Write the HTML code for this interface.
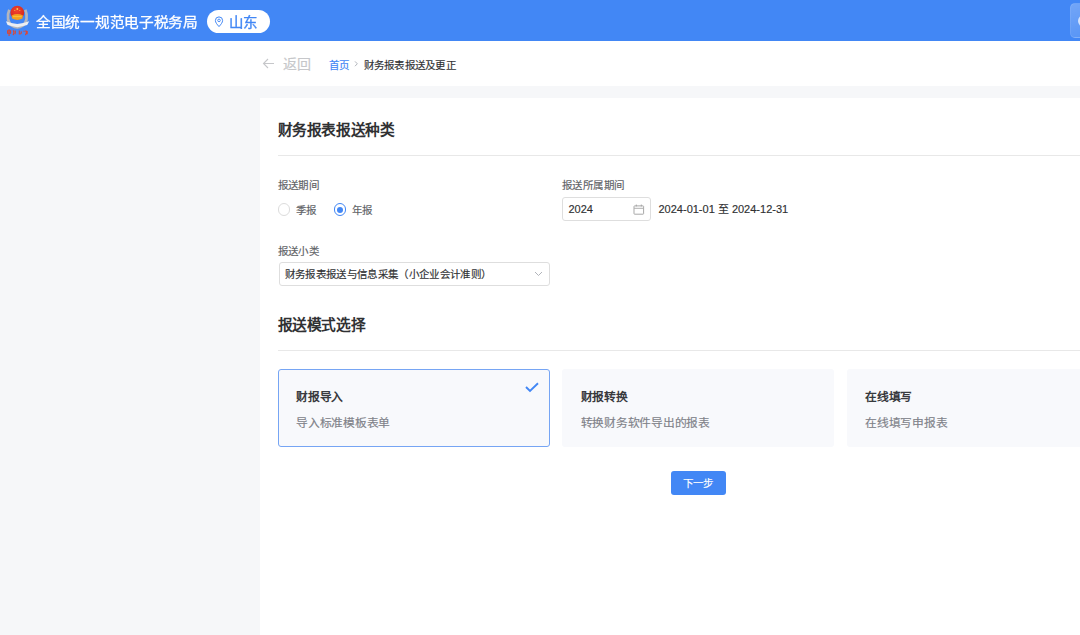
<!DOCTYPE html>
<html lang="zh-CN">
<head>
<meta charset="utf-8">
<style>
*{margin:0;padding:0;box-sizing:border-box}
html,body{width:1080px;height:635px;overflow:hidden;background:#f6f7f9;font-family:"Liberation Sans",sans-serif;-webkit-text-stroke-width:0.15px}
.a{position:absolute;white-space:nowrap}
#hdr{position:absolute;left:0;top:0;width:1080px;height:41.4px;background:#4287f5}
#sub{position:absolute;left:0;top:41px;width:1080px;height:45px;background:#fff}
#card{position:absolute;left:260px;top:97.5px;width:900px;height:600px;background:#fff}
.title{font-size:14.7px;letter-spacing:-0.35px;font-weight:bold;-webkit-text-stroke-width:0;color:#303133;line-height:20px}
.lbl{font-size:10.5px;letter-spacing:0.4px;color:#606266;line-height:14px}
.hr{position:absolute;left:278px;width:802px;height:1px;background:#e8e8e8}
.box{position:absolute;border:1px solid #dedede;border-radius:3px;background:#fff}
.opt{position:absolute;top:369px;width:272px;height:78.4px;background:#f8f9fc;border-radius:3px}
.opt.sel{border:1px solid #76a5f4}
.ot{position:absolute;font-size:11.76px;letter-spacing:-0.25px;-webkit-text-stroke-width:0;font-weight:bold;color:#383a3e;line-height:16px;white-space:nowrap}
.od{position:absolute;font-size:11.76px;letter-spacing:-0.25px;color:#808289;line-height:16px;white-space:nowrap}
</style>
</head>
<body>
<div id="hdr"></div>
<!-- logo -->
<svg class="a" style="left:0;top:0" width="34" height="40" viewBox="0 0 34 40">
  <defs><radialGradient id="rg" cx="0.45" cy="0.35" r="0.7"><stop offset="0" stop-color="#f0432f"/><stop offset="1" stop-color="#d3261a"/></radialGradient></defs>
  <path d="M9.3 9.8 C6.6 16 7.8 22.6 12 25.6 Q17.3 29 22.6 25.6 C26.8 22.6 28 16 25.3 9.8" fill="none" stroke="#b3b6bd" stroke-width="2.7"/>
  <circle cx="17.3" cy="12.7" r="6.9" fill="url(#rg)"/>
  <path d="M11.6 15.4 Q17.3 12.6 23 15.4 L22.4 18.6 Q17.3 21.2 12.2 18.6 Z" fill="#f3a020"/>
  <path d="M13 16.6 h8.6" stroke="#f9c53c" stroke-width="0.9"/>
  <circle cx="17.3" cy="9" r="0.9" fill="#f7d04a"/>
  <circle cx="14.8" cy="10.5" r="0.5" fill="#f7d04a"/>
  <circle cx="19.8" cy="10.5" r="0.5" fill="#f7d04a"/>
  <path d="M5.9 21.3 Q11 23.6 17.3 24 Q23.5 23.6 29.2 21.3 L27.2 25 Q22 26.3 17.3 27.2 Q12.5 26.3 7.6 25 Z" fill="#eceef2"/>
  <path d="M7.6 30.8 h3 v2.4 h-3z M9.1 29.3 v6.8 M13.2 30.2 q1.6 3.5 -0.4 4.8 M15 30.6 q1 2 0 3.6 M19.3 30.6 v3.8 M21 31.4 q1 1.6 -0.6 2.8 M23.4 31.2 h1.2 M25.6 30.3 q1.8 2.2 -0.2 4.8 M27.2 31 v3.2" fill="none" stroke="#e0452f" stroke-width="1.1"/>
</svg>
<div class="a" style="left:36px;top:12px;font-size:14.7px;letter-spacing:-0.3px;color:#fff;-webkit-text-stroke:0.3px #fff;line-height:20px;transform:scaleY(0.9);transform-origin:0 80%">全国统一规范电子税务局</div>
<div class="a" style="left:207px;top:10.4px;width:62.5px;height:22.5px;background:#fff;border-radius:12px"></div>
<svg class="a" style="left:214px;top:16px" width="10" height="12" viewBox="0 0 10 12">
  <path d="M5 10.6 C2.9 8.2 1.4 6.4 1.4 4.5 A3.6 3.6 0 0 1 8.6 4.5 C8.6 6.4 7.1 8.2 5 10.6 Z" fill="none" stroke="#4287f5" stroke-width="1"/>
  <circle cx="5" cy="4.4" r="1.3" fill="none" stroke="#4287f5" stroke-width="0.9"/>
</svg>
<div class="a" style="left:229px;top:11.5px;font-size:14.5px;letter-spacing:-0.5px;color:#4287f5;-webkit-text-stroke:0.35px #4287f5;line-height:20px;transform:scaleY(0.92);transform-origin:0 83%">山东</div>
<div class="a" style="left:1069.8px;top:3.2px;width:30px;height:35px;background:linear-gradient(160deg,rgba(255,255,255,0.26),rgba(255,255,255,0.10));border:1px solid rgba(255,255,255,0.12);border-radius:5px"></div>
<div class="a" style="left:1078.3px;top:15.4px;width:12px;height:12px;background:#e6efff;border-radius:6px;opacity:.85;filter:blur(0.5px)"></div>

<div id="sub"></div>
<svg class="a" style="left:262px;top:58px" width="13" height="11" viewBox="0 0 13 11">
  <path d="M12 5.5 H1.5 M6 1 L1.5 5.5 L6 10" fill="none" stroke="#c6c7ca" stroke-width="1.1"/>
</svg>
<div class="a" style="left:283px;top:55px;font-size:14px;color:#c6c7ca;line-height:18px">返回</div>
<div class="a" style="left:328.5px;top:57.5px;font-size:10.5px;color:#4287f5;line-height:14px">首页</div>
<svg class="a" style="left:353px;top:59.8px" width="6" height="8" viewBox="0 0 6 8">
  <path d="M2 1.4 L4.3 3.8 L2 6.2" fill="none" stroke="#a8abb2" stroke-width="0.9"/>
</svg>
<div class="a" style="left:363.5px;top:57.5px;font-size:10.5px;letter-spacing:0.25px;color:#303133;line-height:14px">财务报表报送及更正</div>

<div id="card"></div>
<div class="a title" style="left:277.5px;top:119.8px">财务报表报送种类</div>
<div class="hr" style="top:155px"></div>

<div class="a lbl" style="left:277.5px;top:178px">报送期间</div>
<div class="a" style="left:277.6px;top:203.4px;width:12.4px;height:12.4px;border:1px solid #dcdcdc;border-radius:50%;background:#fff"></div>
<div class="a lbl" style="left:295.5px;top:202.5px">季报</div>
<div class="a" style="left:333.8px;top:203.4px;width:12.4px;height:12.4px;border:1px solid #4287f5;border-radius:50%;background:#fff"></div>
<div class="a" style="left:337px;top:206.6px;width:6px;height:6px;border-radius:50%;background:#4287f5"></div>
<div class="a lbl" style="left:351.5px;top:202.5px">年报</div>

<div class="a lbl" style="left:562px;top:178px">报送所属期间</div>
<div class="box" style="left:562.2px;top:197.2px;width:88.6px;height:23.5px"></div>
<div class="a" style="left:568.5px;top:201.6px;font-size:11px;color:#303133;line-height:15px">2024</div>
<svg class="a" style="left:633px;top:203.5px" width="12" height="11" viewBox="0 0 12 11">
  <rect x="1" y="1.9" width="9.6" height="8.3" rx="0.6" fill="none" stroke="#a3a3a3" stroke-width="0.95"/>
  <path d="M1 4.3 H10.6" stroke="#b0b0b0" stroke-width="1"/>
  <path d="M3.3 0.6 V2.4 M8.3 0.6 V2.4" stroke="#a3a3a3" stroke-width="1"/>
</svg>
<div class="a" style="left:658.5px;top:201.8px;font-size:11px;color:#303133;line-height:15px">2024-01-01 至 2024-12-31</div>

<div class="a lbl" style="left:277.5px;top:243.5px">报送小类</div>
<div class="box" style="left:278.6px;top:262.2px;width:271.4px;height:23.6px"></div>
<div class="a" style="left:284.5px;top:267px;font-size:10.5px;letter-spacing:0.35px;color:#303133;line-height:14px">财务报表报送与信息采集（小企业会计准则）</div>
<svg class="a" style="left:533.5px;top:271px" width="9" height="6" viewBox="0 0 9 6">
  <path d="M1 1 L4.5 4.5 L8 1" fill="none" stroke="#a8abb2" stroke-width="0.9"/>
</svg>

<div class="a title" style="left:277.5px;top:315.2px">报送模式选择</div>
<div class="hr" style="top:350px"></div>

<div class="opt sel" style="left:278.2px"></div>
<svg class="a" style="left:525px;top:382px" width="14" height="11" viewBox="0 0 14 11">
  <path d="M1 5 L5 9 L13 1.2" fill="none" stroke="#4287f5" stroke-width="1.9"/>
</svg>
<div class="ot" style="left:296px;top:389px">财报导入</div>
<div class="od" style="left:296px;top:414.5px">导入标准模板表单</div>

<div class="opt" style="left:562.2px"></div>
<div class="ot" style="left:580.5px;top:389px">财报转换</div>
<div class="od" style="left:580.5px;top:414.5px">转换财务软件导出的报表</div>

<div class="opt" style="left:846.9px"></div>
<div class="ot" style="left:865.2px;top:389px">在线填写</div>
<div class="od" style="left:865.2px;top:414.5px">在线填写申报表</div>

<div class="a" style="left:671px;top:471px;width:55px;height:23.8px;background:#4287f5;border-radius:3px"></div>
<div class="a" style="left:682.8px;top:476px;font-size:10.5px;color:#fff;line-height:14px">下一步</div>
</body>
</html>
